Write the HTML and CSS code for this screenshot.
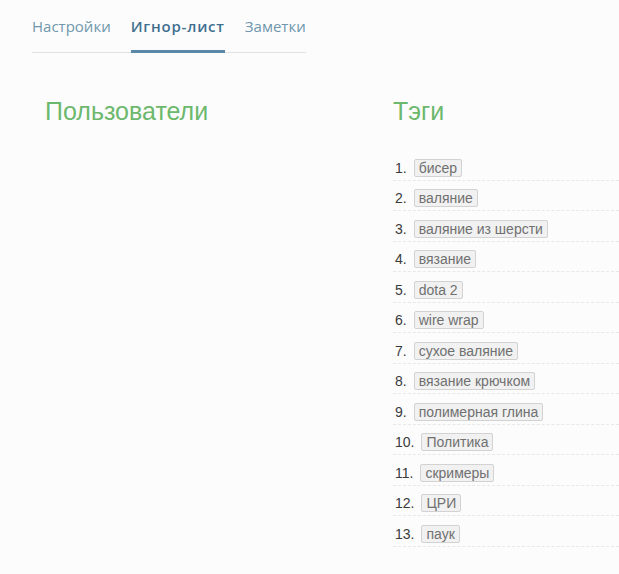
FILE: index.html
```html
<!DOCTYPE html>
<html lang="ru">
<head>
<meta charset="utf-8">
<link rel="stylesheet" href="styles.css">
</head>
<body>
<div class="page">
  <nav class="tabs">
    <a class="tab">Настройки</a>
    <a class="tab active">Игнор-лист</a>
    <a class="tab">Заметки</a>
  </nav>
  <div class="cols">
    <section class="col users">
      <h2 class="title">Пользователи</h2>
    </section>
    <section class="col tags">
      <h2 class="title">Тэги</h2>
      <ol class="taglist">
        <li><span class="num">1.</span><span class="tag">бисер</span></li>
        <li><span class="num">2.</span><span class="tag">валяние</span></li>
        <li><span class="num">3.</span><span class="tag">валяние из шерсти</span></li>
        <li><span class="num">4.</span><span class="tag">вязание</span></li>
        <li><span class="num">5.</span><span class="tag">dota 2</span></li>
        <li><span class="num">6.</span><span class="tag">wire wrap</span></li>
        <li><span class="num">7.</span><span class="tag">сухое валяние</span></li>
        <li><span class="num">8.</span><span class="tag">вязание крючком</span></li>
        <li><span class="num">9.</span><span class="tag">полимерная глина</span></li>
        <li><span class="num">10.</span><span class="tag">Политика</span></li>
        <li><span class="num">11.</span><span class="tag">скримеры</span></li>
        <li><span class="num">12.</span><span class="tag">ЦРИ</span></li>
        <li><span class="num">13.</span><span class="tag">паук</span></li>
      </ol>
    </section>
  </div>
</div>
</body>
</html>
```
FILE: styles.css
```css
html, body {
  margin: 0;
  padding: 0;
  background: #fcfcfc;
}
.page {
  width: 619px;
  height: 574px;
  overflow: hidden;
  font-family: "Liberation Sans", Arial, sans-serif;
}
.tabs {
  display: flex;
  gap: 20px;
  margin: 14px 0 0 32px;
  width: max-content;
  border-bottom: 1px solid #dfe3e6;
}
.tab {
  font-family: "Open Sans", "Liberation Sans", sans-serif;
  font-size: 15px;
  color: #6f97ad;
  padding: 0 0 12px;
  line-height: 24px;
  margin-bottom: -1px;
  white-space: nowrap;
  flex-shrink: 0;
  border-bottom: 3px solid transparent;
}
.tab.active {
  color: #3f6f8f;
  font-weight: 600;
  letter-spacing: 0.8px;
  border-bottom-color: #5a88a8;
}
.cols {
  display: flex;
  margin-top: 43px;
}
.col.users {
  width: 348px;
  padding-left: 45px;
}
.col.tags {
  flex: 1;
}
.title {
  margin: 0;
  font-weight: normal;
  font-size: 25px;
  line-height: 30px;
  color: #6cb86c;
}
.taglist {
  list-style: none;
  margin: 24px 0 0;
  padding: 0;
}
.taglist li {
  display: flex;
  align-items: flex-end;
  height: 26.5px;
  padding: 0 0 3px 2px;
  border-bottom: 1px dashed #e8e8e8;
  font-size: 14px;
  color: #3a3a3a;
}
.num {
  margin-right: 7px;
  line-height: 18px;
}
.tag {
  display: inline-block;
  border: 1px solid #d2d2d2;
  background: #f1f1f1;
  color: #707070;
  border-radius: 2px;
  padding: 0 4px;
  line-height: 16px;
}
```
